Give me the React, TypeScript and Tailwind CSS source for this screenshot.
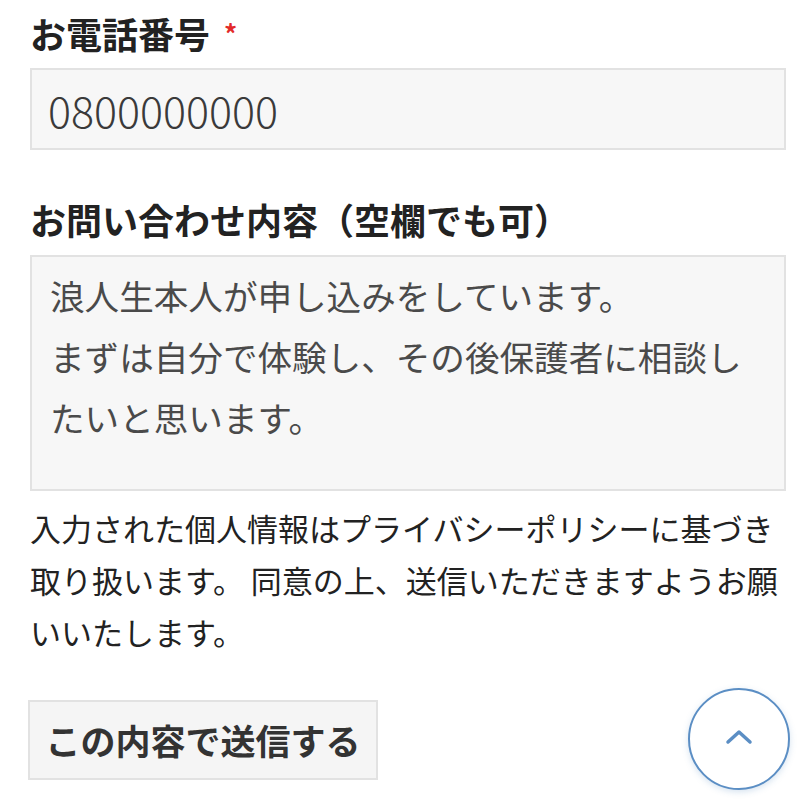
import { useState } from "react";

const font = "font-['Noto_Sans_CJK_JP','Noto_Sans',sans-serif]";

const App = () => {
  const [tel, setTel] = useState("0800000000");
  const [message, setMessage] = useState(
    "浪人生本人が申し込みをしています。\nまずは自分で体験し、その後保護者に相談したいと思います。"
  );

  return (
    <div className={`relative w-full min-h-[809px] bg-white ${font}`}>
      <div className="pl-[30px] pr-[24px] pt-[9px]">
        {/* お電話番号 */}
        <div className="text-[36px] font-bold leading-[48px] text-[#222]">
          お電話番号
          <span className="ml-[14px] text-[26px] align-top text-[#e32a2a]">*</span>
        </div>
        <input
          value={tel}
          onChange={(e) => setTel(e.target.value)}
          className="mt-[11px] w-[756px] h-[82px] border-2 border-[#e2e2e2] bg-[#f7f7f7] pl-[16px] text-[43px] font-light text-[#3a3a3a] outline-none"
        />

        {/* お問い合わせ内容 */}
        <div className="mt-[45px] text-[36px] font-bold leading-[48px] text-[#222]">
          お問い合わせ内容（空欄でも可）
        </div>
        <textarea
          value={message}
          onChange={(e) => setMessage(e.target.value)}
          className="mt-[12px] block w-[756px] h-[236px] resize-none border-2 border-[#e2e2e2] bg-[#f7f7f7] pl-[18px] pr-[24px] pt-[8px] text-[34.6px] leading-[61px] text-[#4a4a4a] outline-none"
        />

        <p className="mt-[11px] text-[31px] leading-[52px] text-[#222]">
          入力された個人情報はプライバシーポリシーに基づき取り扱います。 同意の上、送信いただきますようお願いいたします。
        </p>

        {/* Submit */}
        <button className="mt-[42px] -ml-[2px] h-[80px] w-[350px] border-2 border-[#e2e2e2] bg-[#f5f5f5] text-[35px] font-bold text-[#333]">
          この内容で送信する
        </button>
      </div>

      {/* back to top */}
      <button className="absolute right-[20px] bottom-[19px] flex h-[102px] w-[102px] items-center justify-center rounded-full border-2 border-[#5b8ec4] bg-white shadow-[0_2px_6px_rgba(91,142,196,0.25)]">
        <svg width="28" height="16" viewBox="0 0 28 16" fill="none" className="-mt-[4px]">
          <path
            d="M3 13L14 3L25 13"
            stroke="#5b8ec4"
            strokeWidth="3.5"
            strokeLinecap="round"
            strokeLinejoin="round"
          />
        </svg>
      </button>
    </div>
  );
};

export default App;
